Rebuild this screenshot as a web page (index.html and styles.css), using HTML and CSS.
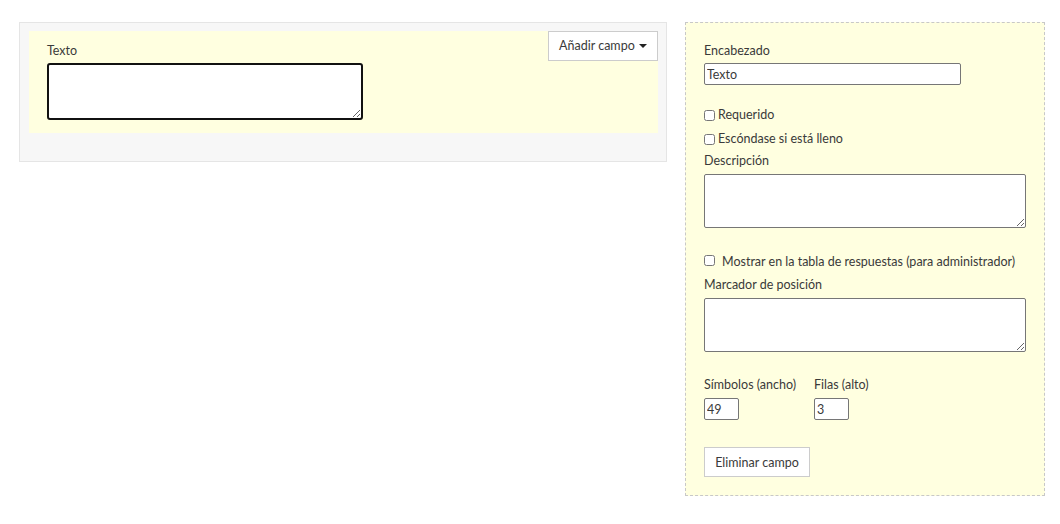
FILE: index.html
```html
<!DOCTYPE html>
<html lang="es">
<head>
<meta charset="utf-8">
<title>Editor de campo</title>
<link rel="stylesheet" href="styles.css">
</head>
<body>
<div class="page">
  <div class="form-panel">
    <div class="field-preview">
      <label class="lbl">Texto</label>
      <textarea class="preview-area"></textarea>
      <button class="btn add-btn">Añadir campo <span class="caret"></span></button>
    </div>
  </div>
  <div class="settings">
    <label class="lbl">Encabezado</label>
    <input class="txt heading-input" type="text" value="Texto">
    <label class="chk first"><input type="checkbox"> Requerido</label>
    <label class="chk"><input type="checkbox">Escóndase si está lleno</label>
    <label class="lbl desc-lbl">Descripción</label>
    <textarea class="area"></textarea>
    <label class="chk show"><input type="checkbox"><span class="show-text">Mostrar en la tabla de respuestas (para administrador)</span></label>
    <label class="lbl ph-lbl">Marcador de posición</label>
    <textarea class="area"></textarea>
    <div class="dims">
      <div class="dim dim-w">
        <label class="lbl">Símbolos (ancho)</label>
        <input class="txt small" type="text" value="49">
      </div>
      <div class="dim">
        <label class="lbl">Filas (alto)</label>
        <input class="txt small" type="text" value="3">
      </div>
    </div>
    <button class="btn del-btn">Eliminar campo</button>
  </div>
</div>
</body>
</html>
```

FILE: styles.css
```css
* { box-sizing: border-box; }
html, body { margin: 0; padding: 0; background: #fff; }
body {
  font-family: Lato, "Liberation Sans", Arial, sans-serif;
  font-size: 12.5px;
  color: #3a3a3a;
}
.page {
  display: flex;
  align-items: flex-start;
  gap: 18px;
  padding: 22px 0 0 19px;
}
.form-panel {
  width: 648px;
  background: #f7f7f7;
  border: 1px solid #e5e5e5;
  padding: 8px 8px 28px 9px;
}
.field-preview {
  position: relative;
  background: #ffffe0;
  padding: 10px 18px 13px 18px;
  display: flex;
  flex-direction: column;
  align-items: flex-start;
}
.lbl {
  display: block;
  line-height: 18px;
  height: 18px;
  padding-top: 1px;
  color: #3a3a3a;
  white-space: nowrap;
}
.preview-area {
  display: block;
  margin: 4px 0 0 0;
  width: 316px;
  height: 57px;
  border: 2px solid #111;
  border-radius: 3px;
  background: #fff;
  resize: vertical;
  font: inherit;
}
.btn {
  font-family: inherit;
  font-size: 12.5px;
  color: #3a3a3a;
  background: #fff;
  border: 1px solid #ccc;
  border-radius: 0;
  cursor: pointer;
  height: 30px;
  padding: 0 11px;
  white-space: nowrap;
}
.add-btn {
  position: absolute;
  top: 0;
  right: 0;
  width: 110px;
  padding: 0 0 2px 0;
}
.caret {
  display: inline-block;
  width: 0;
  height: 0;
  border-left: 4px solid transparent;
  border-right: 4px solid transparent;
  border-top: 4px solid #222;
  vertical-align: middle;
  margin-left: 1px;
}
.settings {
  width: 360px;
  background: #ffffe0;
  border: 1px dashed #c8c8c8;
  padding: 18px 18px 18px 18px;
  display: flex;
  flex-direction: column;
  align-items: flex-start;
}
.txt {
  display: block;
  font-family: inherit;
  font-size: 12.5px;
  color: #3a3a3a;
  border: 1px solid #767676;
  border-radius: 2px;
  background: #fff;
  height: 22px;
  padding: 0 2px;
  margin: 4px 0 0 0;
}
.heading-input { width: 257px; }
.chk {
  display: flex;
  align-items: center;
  line-height: 18px;
  height: 18px;
  margin-top: 6px;
  white-space: nowrap;
}
.chk input {
  margin: 0 3px 0 0;
  width: 11px;
  height: 11px;
}
.chk.first { margin-top: 21px; }
.desc-lbl { margin-top: 3px; }
.area {
  display: block;
  margin: 5px 0 0 0;
  width: 322px;
  height: 54px;
  border: 1px solid #767676;
  border-radius: 2px;
  background: #fff;
  resize: vertical;
  font: inherit;
}
.chk.show { margin-top: 25px; align-items: flex-start; }
.chk.show input { margin-top: 2px; margin-right: 7px; }
.ph-lbl { margin-top: 4px; }
.dims {
  display: flex;
  gap: 17px;
  margin-top: 23px;
}
.dim { display: flex; flex-direction: column; align-items: flex-start; }
.dim-w { width: 93px; }
.small { width: 35px; height: 22px; margin-top: 5px; }
.del-btn {
  margin-top: 27px;
  width: 106px;
  padding: 0;
}
```
